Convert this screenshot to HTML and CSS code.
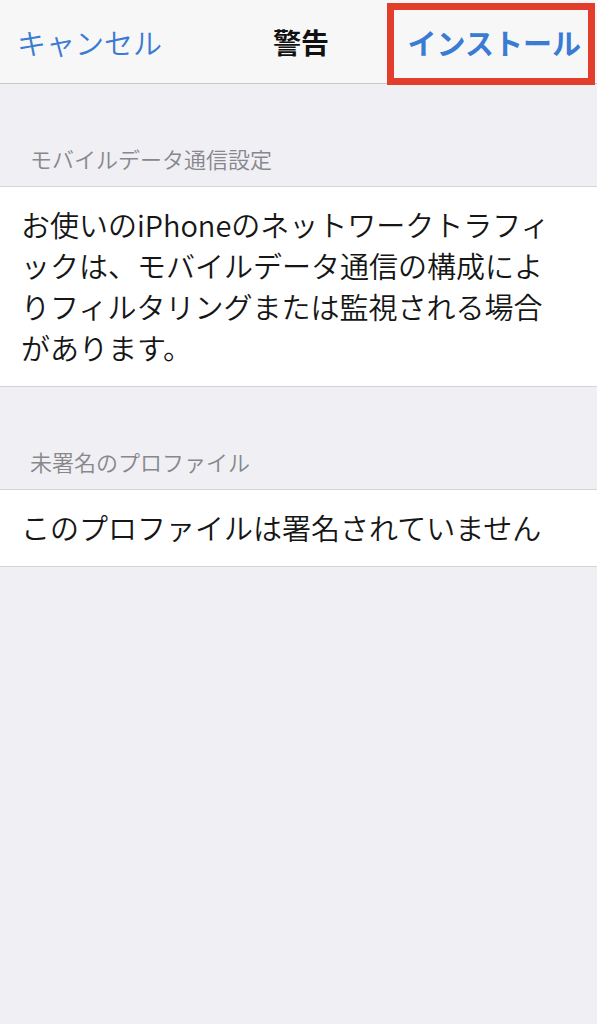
FILE: index.html
```html
<!DOCTYPE html>
<html lang="ja">
<head>
<meta charset="utf-8">
<title>警告</title>
<link rel="stylesheet" href="styles.css">
</head>
<body>
<header class="nav">
  <span class="nav-btn nav-left">キャンセル</span>
  <span class="nav-title">警告</span>
  <span class="nav-btn nav-right">インストール</span>
  <span class="highlight" aria-hidden="true"></span>
</header>
<main class="content">
  <section class="group">
    <h2 class="group-header">モバイルデータ通信設定</h2>
    <div class="cell">
      <p class="cell-text">お使いのiPhoneのネットワークトラフィ<br>ックは、モバイルデータ通信の構成によ<br>りフィルタリングまたは監視される場合<br>があります。</p>
    </div>
  </section>
  <section class="group">
    <h2 class="group-header">未署名のプロファイル</h2>
    <div class="cell">
      <p class="cell-text">このプロファイルは署名されていません</p>
    </div>
  </section>
</main>
</body>
</html>
```
FILE: styles.css
```css
html, body {
  margin: 0;
  padding: 0;
  background: #efeff4;
  min-height: 1024px;
}
body {
  font-family: "Noto Sans CJK JP", "Noto Sans", sans-serif;
  color: #141414;
}
.nav {
  position: relative;
  height: 83px;
  background: #f7f7f8;
  border-bottom: 1px solid #c9c8cd;
  display: grid;
  grid-template-columns: 1fr auto 1fr;
  align-items: center;
  padding: 0 16px 0 17px;
}
.nav-btn {
  font-size: 29px;
  line-height: 36px;
  font-weight: 350;
  color: #3a7bd3;
  white-space: nowrap;
}
.nav-left {
  justify-self: start;
}
.nav-right {
  justify-self: end;
  font-weight: 700;
}
.nav-title {
  font-size: 28px;
  line-height: 36px;
  font-weight: 700;
  color: #111;
  margin-left: 4px;
}
.highlight {
  position: absolute;
  top: 3px;
  right: 2px;
  width: 208px;
  height: 82px;
  box-sizing: border-box;
  border: 7px solid #e23e2b;
}
.group-header {
  margin: 0;
  padding: 61px 30px 15px;
  font-size: 22px;
  line-height: 26px;
  font-weight: 350;
  color: #87878c;
}
.cell {
  background: #fff;
  border-top: 1px solid #d4d3d8;
  border-bottom: 1px solid #d4d3d8;
  padding: 17px 21px 18px;
}
.cell-text {
  margin: 0;
  font-size: 29px;
  line-height: 41px;
  font-weight: 350;
  white-space: nowrap;
  color: #161616;
}
```
